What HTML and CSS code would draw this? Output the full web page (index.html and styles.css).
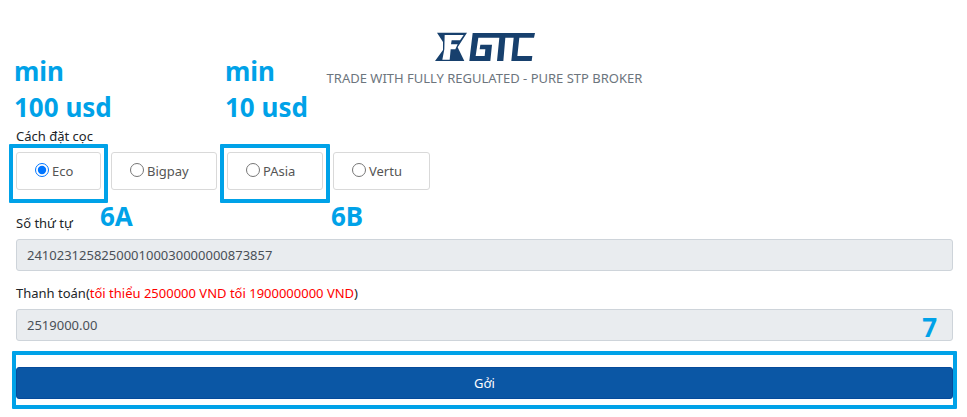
FILE: index.html
```html
<!DOCTYPE html>
<html lang="vi">
<head>
    <meta charset="UTF-8">
    <meta name="viewport" content="width=device-width, initial-scale=1.0">
    <title>GTC</title>
    <link rel="stylesheet" href="styles.css">
</head>
<body>
    <header class="header">
        <svg class="logo" viewBox="0 0 300 90" role="img" aria-label="GTC">
            <path fill="#17406d" d="M6 2H96L68 46L88 87H0L24 54V30Z"/>
            <path fill="#fff" d="M29 9H86L75 25H50L48 37H68L61 52H47L44 83H22L28 52Z"/>
            <path fill="#17406d" d="M113 3H300L297 17H253L247 72H292L290 87H229L236 17H211L205 87H186L193 17H130L122 72H149L151 52H134L136 38H171L166 87H103Z"/>
        </svg>
        <p class="tagline">TRADE WITH FULLY REGULATED - PURE STP BROKER</p>
    </header>
    <form class="form">
        <fieldset class="form-group methods">
            <legend>Cách đặt cọc</legend>
            <div class="options">
                <div class="option option-eco">
                    <input type="radio" id="eco" name="method" checked>
                    <label for="eco">Eco</label>
                    <span class="frame"></span>
                    <span class="note note-top">min<br>100 usd</span>
                    <span class="note note-step">6A</span>
                </div>
                <div class="option option-bigpay">
                    <input type="radio" id="bigpay" name="method">
                    <label for="bigpay">Bigpay</label>
                </div>
                <div class="option option-pasia">
                    <input type="radio" id="pasia" name="method">
                    <label for="pasia">PAsia</label>
                    <span class="frame"></span>
                    <span class="note note-top">min<br>10 usd</span>
                </div>
                <div class="option option-vertu">
                    <input type="radio" id="vertu" name="method">
                    <label for="vertu">Vertu</label>
                    <span class="note note-step-start">6B</span>
                </div>
            </div>
        </fieldset>
        <div class="form-group">
            <label for="order">Số thứ tự</label>
            <input class="control" type="text" id="order" value="241023125825000100030000000873857" readonly>
        </div>
        <div class="form-group">
            <label for="amount">Thanh toán(<span class="limit">tối thiểu 2500000 VND tối 1900000000 VND</span>)</label>
            <input class="control" type="text" id="amount" value="2519000.00" readonly>
            <span class="note note-amount">7</span>
        </div>
        <div class="submit">
            <button type="submit">Gởi</button>
            <span class="frame"></span>
        </div>
    </form>
</body>
</html>
```

FILE: styles.css
```css
* {
    box-sizing: border-box;
}
body {
    margin: 0;
    padding: 32px 14px 18px 16px;
    background: #fff;
    color: #212529;
    font-family: "Noto Sans", "Open Sans", sans-serif;
    font-size: 13px;
    line-height: 20px;
}
.header {
    text-align: center;
}
.logo {
    display: block;
    width: 100px;
    height: 30px;
    margin: 0 auto;
}
.tagline {
    margin: 6px 0 38px;
    color: #6c757d;
}
.form-group {
    position: relative;
    margin: 0 0 12px;
    padding: 0;
    border: 0;
}
.form-group > label, legend {
    display: block;
    margin-bottom: 6px;
    padding: 0;
}
.methods {
    margin-bottom: 23px;
}
.options {
    display: flex;
    gap: 10px;
}
.option {
    position: relative;
    display: flex;
    align-items: center;
    height: 38px;
    padding: 0 18px;
    border: 1px solid #d9d9d9;
    border-radius: 3px;
    color: #555;
}
.option-eco {
    width: 85px;
}
.option-bigpay {
    width: 106px;
}
.option-pasia {
    width: 96px;
}
.option-vertu {
    width: 97px;
}
.option input {
    width: 14px;
    height: 14px;
    margin: 0 3px 2px 0;
    accent-color: #0075ff;
}
.control {
    display: block;
    width: 100%;
    height: 32px;
    padding: 0 10px;
    border: 1px solid #ced4da;
    border-radius: 3px;
    background: #e9ecef;
    color: #495057;
    font: inherit;
}
.limit {
    color: #f00;
}
.submit {
    position: relative;
    margin-top: 26px;
}
.submit button {
    display: block;
    width: 100%;
    height: 32px;
    border: 1px solid #064b9b;
    border-radius: 3px;
    background: #0b57a5;
    color: #fff;
    font: inherit;
}
.frame {
    position: absolute;
    inset: -9px -8px -14px;
    border: 4px solid #00a2e8;
    border-radius: 1px;
    pointer-events: none;
}
.submit .frame {
    inset: -16px -4px -10px;
}
.note {
    position: absolute;
    color: #00a2e8;
    font-size: 26px;
    font-weight: bold;
    line-height: 36px;
    white-space: nowrap;
}
.note-top {
    bottom: 64px;
    left: -3px;
}
.note-step {
    top: 45px;
    left: 100%;
}
.note-step-start {
    top: 45px;
    left: -3px;
}
.note-amount {
    right: 16px;
    bottom: -4px;
}
```
